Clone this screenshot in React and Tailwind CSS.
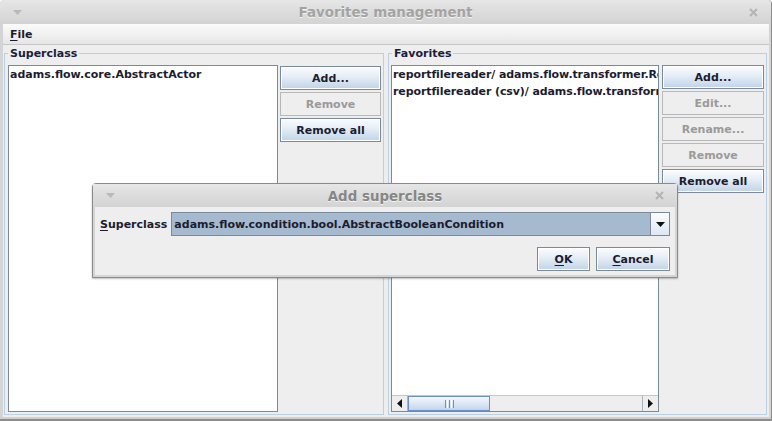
import React from "react";

const btnOn =
  "h-[24px] w-full border border-[#7a8a99] bg-[linear-gradient(to_bottom,#fbfcfe,#e4edf6_45%,#c0d3e8)] shadow-[inset_0_0_0_1px_#ffffff] text-[#1c1c30] flex items-center justify-center";
const btnOff =
  "h-[24px] w-full border border-[#b8b8b8] bg-[#eeeeee] text-[#9a9a9a] flex items-center justify-center";

function DownTri({ className }) {
  return (
    <svg width="9" height="5" viewBox="0 0 9 5" className={className}>
      <polygon points="0,0 9,0 4.5,5" fill="currentColor" />
    </svg>
  );
}

function CloseX() {
  return (
    <svg width="9" height="9" viewBox="0 0 9 9">
      <path d="M1 1 L8 8 M8 1 L1 8" stroke="#b4b4b4" strokeWidth="2" />
    </svg>
  );
}

function TitleBar({ title, h = "h-[24px]", color = "text-[#a3a3a3]" }) {
  return (
    <div
      className={`${h} flex items-center bg-[linear-gradient(to_bottom,#e6e6e6,#d3d3d3)] px-[10px] shrink-0`}
    >
      <DownTri className="text-[#b9b9b9] ml-[3px]" />
      <div className={`flex-1 text-center text-[13.4px] ${color} [text-shadow:0_1px_0_#f4f4f4] pt-[1px]`}>
        {title}
      </div>
      <div className="mr-[3px] flex items-center">
        <CloseX />
      </div>
    </div>
  );
}

export default function App() {
  return (
    <div className="w-[772px] h-[421px] relative overflow-hidden flex flex-col font-['DejaVu_Sans',sans-serif] font-bold text-[11px] leading-[13px] bg-[#d4d4d4] rounded-tl-[4px] rounded-tr-[4px] border-r border-[#8c8c8c]">
      <TitleBar title="Favorites management" />
      <div className="flex-1 flex flex-col border-l-[3px] border-r-[2px] border-[#d4d4d4] bg-[#eeeeee]">
        {/* menu bar */}
        <div className="h-[21px] shrink-0 flex items-center pl-[7px] bg-[linear-gradient(to_bottom,#fbfbfb,#e6e6e6)] border-b border-[#c6c6c6] text-[#1c1c30]">
          <span>
            <span className="underline underline-offset-[2px]">F</span>ile
          </span>
        </div>
        {/* content */}
        <div className="flex-1 flex gap-[4px] pl-[1px] pt-[2px]">
          {/* left panel */}
          <fieldset className="w-[380px] h-[368px] border border-[#b8cfe5] pl-[3px] pr-[2px] pt-[5px] pb-[2px] flex gap-[2px]">
            <legend className="px-[2px] text-[#1c1c3c] leading-[13px]">Superclass</legend>
            <div className="w-[270px] h-full bg-white border border-[#7a8a99] px-[1px] text-[#1c1c30] leading-[17px]">
              adams.flow.core.AbstractActor
            </div>
            <div className="w-[101px] flex flex-col gap-[2px] pt-[1px]">
              <div className={btnOn}>Add...</div>
              <div className={btnOff}>Remove</div>
              <div className={btnOn}>Remove all</div>
            </div>
          </fieldset>
          {/* right panel */}
          <fieldset className="w-[379px] h-[368px] border border-[#b8cfe5] pl-[2px] pr-[2px] pt-[5px] pb-[2px] flex gap-[3px]">
            <legend className="ml-[1px] px-[2px] text-[#1c1c3c] leading-[13px]">Favorites</legend>
            <div className="w-[268px] h-full bg-white border border-[#7a8a99] flex flex-col overflow-hidden">
              <div className="flex-1 pl-[1px] text-[#1c1c30] leading-[17px] whitespace-nowrap overflow-hidden tracking-[-0.1px]">
                <div>reportfilereader/ adams.flow.transformer.ReportFileReader</div>
                <div>reportfilereader (csv)/ adams.flow.transformer.ReportFileReader</div>
              </div>
              {/* horizontal scrollbar */}
              <div className="h-[16px] shrink-0 flex bg-[#eeeeee] border-t border-[#c0c8d0]">
                <div className="w-[16px] h-full border-r border-[#a8b4c0] flex items-center justify-center">
                  <svg width="5" height="9" viewBox="0 0 5 9">
                    <polygon points="5,0 5,9 0,4.5" fill="#111" />
                  </svg>
                </div>
                <div className="w-[82px] h-full border border-[#6d8fc9] bg-[linear-gradient(to_bottom,#f6f9fd,#dce7f5_50%,#c3d5ee)] flex items-center justify-center gap-[1px]">
                  <div className="w-[1px] h-[8px] bg-[#6d8fc9]" />
                  <div className="w-[1px] h-[8px] bg-[#ffffff]" />
                  <div className="w-[1px] h-[8px] bg-[#6d8fc9]" />
                  <div className="w-[1px] h-[8px] bg-[#ffffff]" />
                  <div className="w-[1px] h-[8px] bg-[#6d8fc9]" />
                </div>
                <div className="flex-1" />
                <div className="w-[16px] h-full border-l border-[#a8b4c0] flex items-center justify-center">
                  <svg width="5" height="9" viewBox="0 0 5 9">
                    <polygon points="0,0 0,9 5,4.5" fill="#111" />
                  </svg>
                </div>
              </div>
            </div>
            <div className="w-[102px] flex flex-col gap-[2px]">
              <div className={btnOn}>Add...</div>
              <div className={btnOff}>Edit...</div>
              <div className={btnOff}>Rename...</div>
              <div className={btnOff}>Remove</div>
              <div className={btnOn}>Remove all</div>
            </div>
          </fieldset>
        </div>
      </div>
      <div className="h-[4px] shrink-0 bg-[#d0d0d0] border-b-[2px] border-[#8c8c8c]" />

      {/* dialog */}
      <div className="absolute left-[92px] top-[183px] w-[586px] h-[95px] flex flex-col bg-[#d4d4d4] border border-[#8a8a8a] rounded-t-[4px] shadow-[0_1px_2px_rgba(0,0,0,0.25)]">
        <TitleBar title="Add superclass" h="h-[23px]" color="text-[#868686]" />
        <div className="flex-1 mx-[2px] mb-[2px] bg-[#eeeeee] flex flex-col px-[5px] pt-[5px]">
          <div className="flex items-center gap-[4px] h-[24px]">
            <span className="text-[#1c1c30]">
              <span className="underline underline-offset-[2px]">S</span>uperclass
            </span>
            <div className="flex-1 h-[24px] border border-[#7a8a99] bg-[#a5bacf] flex items-center">
              <div className="flex-1 pl-[2px] text-[#1c1c30]">adams.flow.condition.bool.AbstractBooleanCondition</div>
              <div className="w-[19px] h-full border-l border-[#7a8a99] bg-[linear-gradient(to_bottom,#fbfcfe,#dde8f3)] flex items-center justify-center">
                <DownTri className="text-[#111]" />
              </div>
            </div>
          </div>
          <div className="flex justify-end gap-[6px] mt-[11px]">
            <div className={btnOn.replace("w-full", "w-[53px]")}>
              <span>
                <span className="underline underline-offset-[2px]">O</span>K
              </span>
            </div>
            <div className={btnOn.replace("w-full", "w-[74px]")}>
              <span>
                <span className="underline underline-offset-[2px]">C</span>ancel
              </span>
            </div>
          </div>
        </div>
      </div>
    </div>
  );
}
